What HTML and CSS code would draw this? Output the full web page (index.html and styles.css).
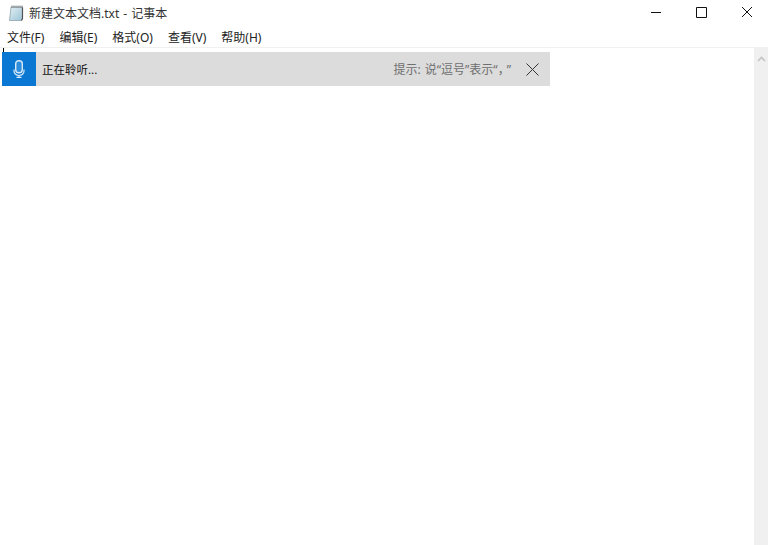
FILE: index.html
```html
<!DOCTYPE html>
<html lang="zh-CN">
<head>
    <meta charset="UTF-8">
    <title>新建文本文档.txt - 记事本</title>
    <link rel="stylesheet" href="styles.css">
</head>
<body>
    <div class="window">
        <div class="titlebar">
            <svg class="app-icon" width="16" height="16" viewBox="0 0 16 16">
                <defs>
                    <linearGradient id="page" x1="0" y1="0" x2="1" y2="1">
                        <stop offset="0" stop-color="#e3eff2"/>
                        <stop offset="1" stop-color="#9cc4d8"/>
                    </linearGradient>
                </defs>
                <path d="M3 2h11.5v11l-1 2.5H1.5z" fill="url(#page)" stroke="#8fa3ad" stroke-width=".8"/>
                <path d="M14.5 2.5v11l-1 2" fill="none" stroke="#555" stroke-width="1.2"/>
                <path d="M4 .5v2.5M6 .5v2.5M8 .5v2.5M10 .5v2.5M12 .5v2.5M14 .5v2.5" stroke="#666" stroke-width=".8"/>
            </svg>
            <span class="title">新建文本文档.txt - 记事本</span>
            <div class="controls">
                <button class="ctl">
                    <svg width="12" height="12" viewBox="0 0 12 12"><path d="M0 5.5h10" stroke="#111" fill="none"/></svg>
                </button>
                <button class="ctl">
                    <svg width="12" height="12" viewBox="0 0 12 12"><path d="M.5 .5h10v10h-10z" stroke="#111" fill="none"/></svg>
                </button>
                <button class="ctl">
                    <svg width="12" height="12" viewBox="0 0 12 12"><path d="M1 0l10 10M11 0L1 10" stroke="#111" fill="none"/></svg>
                </button>
            </div>
        </div>

        <div class="menubar">
            <span class="menu-item">文件(F)</span>
            <span class="menu-item">编辑(E)</span>
            <span class="menu-item">格式(O)</span>
            <span class="menu-item">查看(V)</span>
            <span class="menu-item">帮助(H)</span>
        </div>

        <div class="editor">
            <div class="text-area">
                <div class="caret"></div>
            </div>
            <div class="scrollbar">
                <svg class="scroll-up" width="9" height="6" viewBox="0 0 9 6"><path d="M1 5l3.5-3.5L8 5" stroke="#c4c4c4" stroke-width="1.6" fill="none"/></svg>
            </div>

            <div class="dictation">
                <div class="mic-box">
                    <svg width="12" height="18" viewBox="0 0 12 18">
                        <rect x="2.7" y=".7" width="6.6" height="12" rx="3" fill="#2f8edb" stroke="#d6e9f8" stroke-width="1.4"/>
                        <path d="M1 9.5v1.5a5 4.5 0 0 0 10 0v-1.5M6 15.5v1.5M3.5 17.3h5" fill="none" stroke="#d6e9f8" stroke-width="1.2"/>
                    </svg>
                </div>
                <span class="listening">正在聆听...</span>
                <span class="hint">提示: 说“逗号”表示“<span class="tight">，</span>&#8201;”</span>
                <svg class="dict-close" width="13" height="13" viewBox="0 0 13 13"><path d="M.5.5l12 12M12.5.5l-12 12" stroke="#333" fill="none"/></svg>
            </div>
        </div>
    </div>
</body>
</html>
```

FILE: styles.css
```css
html, body {
    margin: 0;
    height: 100%;
    background: #fff;
    overflow: hidden;
}
.window {
    display: flex;
    flex-direction: column;
    height: 545px;
    font-family: "Noto Sans", "Noto Sans CJK SC", sans-serif;
    font-size: 12px;
    color: #222;
}
.titlebar {
    display: flex;
    align-items: center;
    height: 26px;
    padding-left: 8px;
    flex-shrink: 0;
}
.app-icon {
    margin-right: 5px;
}
.title {
    flex: 1;
    color: #333;
    word-spacing: 1px;
}
.controls {
    display: flex;
}
.ctl {
    width: 45px;
    height: 26px;
    padding: 0 0 0 3px;
    box-sizing: border-box;
    border: none;
    background: none;
    display: flex;
    align-items: center;
    justify-content: center;
}
.menubar {
    display: flex;
    gap: 15px;
    height: 21px;
    align-items: center;
    padding-left: 7px;
    flex-shrink: 0;
    border-bottom: 1px solid #f0f0f0;
}
.editor {
    position: relative;
    flex: 1;
    display: flex;
}
.text-area {
    flex: 1;
    padding-left: 3px;
}
.caret {
    width: 1px;
    height: 16px;
    background: #000;
}
.scrollbar {
    width: 14px;
    background: #f0f0f0;
    display: flex;
    justify-content: center;
    align-items: flex-start;
    padding-top: 8px;
    box-sizing: border-box;
}
.dictation {
    position: absolute;
    left: 2px;
    top: 4px;
    width: 548px;
    height: 34px;
    display: flex;
    align-items: center;
    background: #dcdcdc;
}
.mic-box {
    width: 34px;
    height: 34px;
    background: #0a78d2;
    display: flex;
    align-items: center;
    justify-content: center;
}
.listening {
    flex: 1;
    margin-left: 6px;
    font-size: 11.5px;
    color: #111;
}
.hint {
    color: #6f6f6f;
    margin-right: 15px;
    word-spacing: 1px;
}
.tight {
    letter-spacing: -5px;
}
.dict-close {
    margin-right: 11px;
}
```
